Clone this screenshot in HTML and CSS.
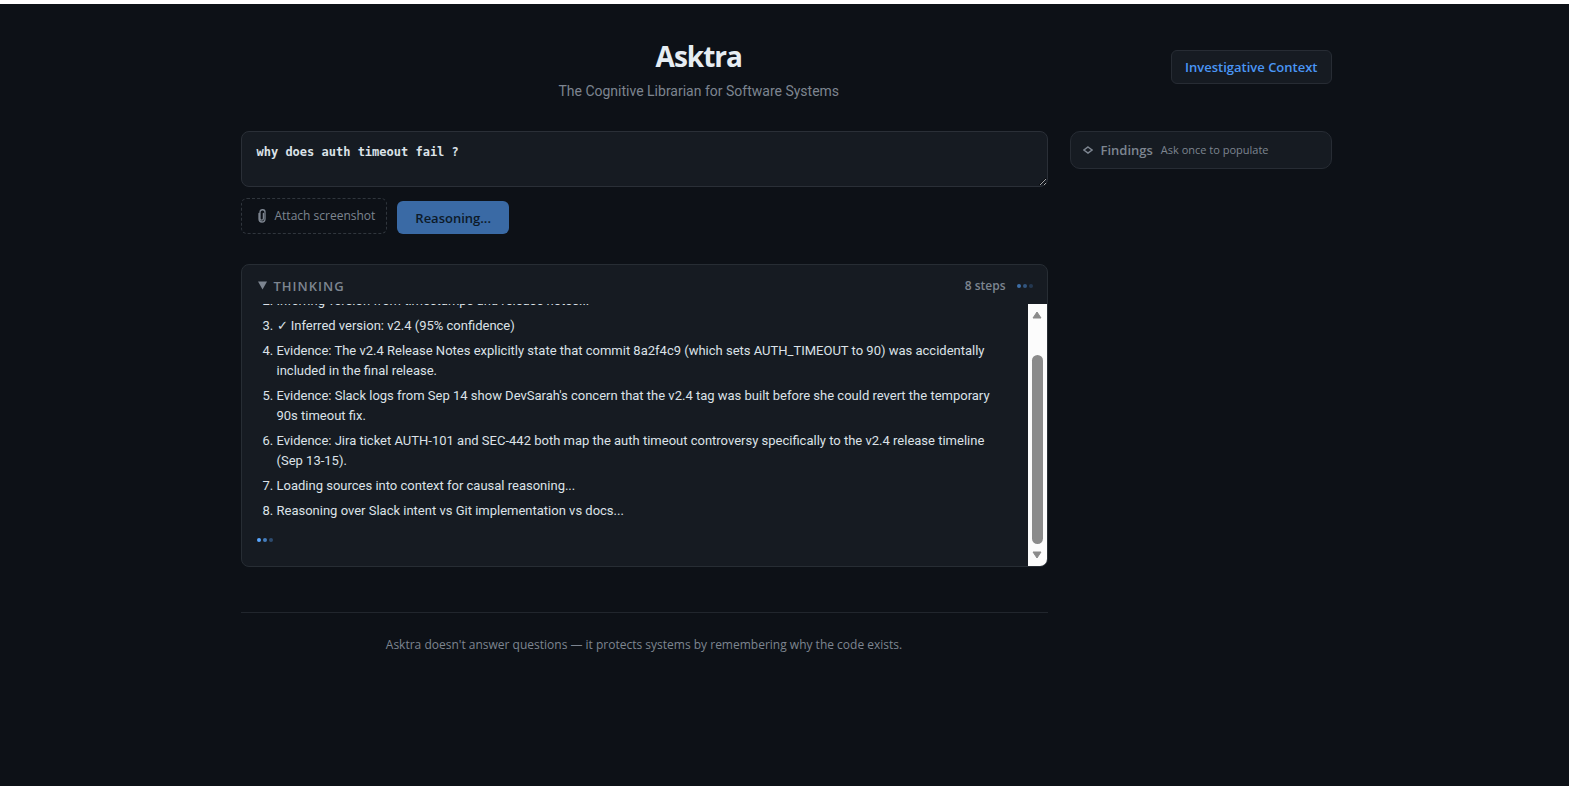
FILE: index.html
```
<!DOCTYPE html>
<html lang="en">
<head>
    <meta charset="UTF-8">
    <meta name="viewport" content="width=device-width, initial-scale=1.0">
    <title>Asktra</title>
    <link rel="stylesheet" href="styles.css">
</head>
<body>
    <div class="app">
        <header class="header">
            <div class="brand">
                <h1>Asktra</h1>
                <p class="tagline">The Cognitive Librarian for Software Systems</p>
            </div>
            <button type="button" class="context-btn">Investigative Context</button>
        </header>

        <div class="layout">
            <main class="main">
                <form class="ask">
                    <textarea class="query" aria-label="Question">why does auth timeout fail ?</textarea>
                    <div class="actions">
                        <button type="button" class="attach">
                            <svg class="clip" viewBox="0 0 10 14" fill="none" stroke="currentColor" stroke-linecap="round">
                                <path d="M2 4.5v5.5a3 3 0 0 0 6 0V3.500a2.500 2.500 0 0 0-5-.5v6.500a1.700 1.700 0 0 0 3.400 0V4.500" stroke-width="1.300"/>
                            </svg>
                            Attach screenshot
                        </button>
                        <button type="submit" class="submit" disabled>Reasoning...</button>
                    </div>
                </form>

                <section class="thinking">
                    <button type="button" class="thinking-head" aria-expanded="true">
                        <svg class="caret" viewBox="0 0 9 9"><path d="M0 0.500h9L4.500 8.500z" fill="currentColor"/></svg>
                        <span class="thinking-title">Thinking</span>
                        <span class="steps-count">8 steps</span>
                        <span class="dots head-dots"><i></i><i></i><i></i></span>
                    </button>
                    <div class="thinking-body">
                        <div class="thinking-scroll">
                            <ol class="steps" start="2">
                                <li>Inferring version from timestamps and release notes...</li>
                                <li>✓ Inferred version: v2.4 (95% confidence)</li>
                                <li>Evidence: The v2.4 Release Notes explicitly state that commit 8a2f4c9 (which sets AUTH_TIMEOUT to 90) was accidentally included in the final release.</li>
                                <li>Evidence: Slack logs from Sep 14 show DevSarah's concern that the v2.4 tag was built before she could revert the temporary 90s timeout fix.</li>
                                <li>Evidence: Jira ticket AUTH-101 and SEC-442 both map the auth timeout controversy specifically to the v2.4 release timeline (Sep 13-15).</li>
                                <li>Loading sources into context for causal reasoning...</li>
                                <li>Reasoning over Slack intent vs Git implementation vs docs...</li>
                            </ol>
                            <div class="dots"><i></i><i></i><i></i></div>
                        </div>
                        <div class="scrollbar" aria-hidden="true">
                            <svg class="arrow" viewBox="0 0 10 8"><path d="M5 1L9 7H1z"/></svg>
                            <div class="track"><div class="thumb"></div></div>
                            <svg class="arrow" viewBox="0 0 10 8"><path d="M5 7L9 1H1z"/></svg>
                        </div>
                    </div>
                </section>

                <footer class="footer">Asktra doesn't answer questions — it protects systems by remembering why the code exists.</footer>
            </main>

            <aside class="findings">
                <svg class="diamond" viewBox="0 0 10 8" fill="none" stroke="currentColor"><path d="M5 1L9 4L5 7L1 4z" stroke-width="1.500"/></svg>
                <span class="findings-title">Findings</span>
                <span class="findings-hint">Ask once to populate</span>
            </aside>
        </div>
    </div>
</body>
</html>
```
FILE: styles.css
```
* {
    box-sizing: border-box;
}
body {
    margin: 0;
    min-height: 100vh;
    background-color: #0d1117;
    border-top: 4px solid #fff;
    color: #e6edf3;
    font-family: "Open Sans", "Noto Sans", sans-serif;
    font-size: 13px;
    line-height: 20px;
}
button, textarea {
    font-family: inherit;
    font-size: inherit;
    line-height: inherit;
}
.app {
    max-width: 1142px;
    margin: 0 auto;
    padding: 32px 24px 32px 27px;
}
.header {
    display: flex;
    align-items: flex-start;
    gap: 14px;
    margin-bottom: 29px;
}
.brand {
    flex: 1;
    text-align: center;
}
h1 {
    margin: 0 0 4px;
    font-size: 28px;
    line-height: 40px;
    font-weight: 700;
    letter-spacing: -1px;
}
.tagline {
    margin: 0;
    line-height: 22px;
    font-family: Roboto, sans-serif;
    font-size: 14px;
    color: #7d8590;
}
.context-btn {
    margin-top: 14px;
    padding: 6px 13px;
    background-color: #161b22;
    border: 1px solid #272c34;
    border-radius: 6px;
    color: #4a96f5;
    font-weight: 600;
}
.layout {
    display: grid;
    grid-template-columns: minmax(0, 1fr) 262px;
    gap: 22px;
    align-items: start;
}
.ask {
    margin-bottom: 30px;
}
.query {
    display: block;
    width: 100%;
    height: 56px;
    padding: 10px 15px;
    background-color: #161b22;
    border: 1px solid #2a2f37;
    border-radius: 8px;
    color: #dce2e8;
    font-family: "DejaVu Sans Mono", monospace;
    font-size: 12px;
    font-weight: 700;
    resize: vertical;
    outline: none;
}
.actions {
    display: flex;
    align-items: flex-end;
    gap: 10px;
    margin-top: 11px;
}
.attach {
    display: flex;
    align-items: center;
    gap: 8px;
    height: 36px;
    padding: 0 11px 0 15px;
    background: none;
    border: 1px dashed #30363d;
    border-radius: 6px;
    color: #7d8590;
    font-size: 12px;
}
.clip {
    width: 10px;
    height: 14px;
}
.submit {
    height: 33px;
    padding: 0 18px;
    background-color: #3a6aa5;
    border: 0;
    border-radius: 6px;
    color: #0d1a29;
    font-weight: 600;
}
.thinking {
    background-color: #161b22;
    border: 1px solid #272d34;
    border-radius: 8px;
    overflow: hidden;
}
.thinking-head {
    display: flex;
    align-items: center;
    width: 100%;
    height: 39px;
    padding: 2px 14px 0 16px;
    background: none;
    border: 0;
    color: #7d8590;
    font-weight: 600;
}
.caret {
    width: 9px;
    height: 9px;
    margin-right: 7px;
}
.thinking-title {
    text-transform: uppercase;
    letter-spacing: 1px;
}
.steps-count {
    margin-left: auto;
    font-size: 12px;
}
.dots {
    display: flex;
    gap: 2px;
}
.dots i {
    width: 4px;
    height: 4px;
    border-radius: 50%;
    background-color: #58a6ff;
}
.dots i:nth-child(2) {
    opacity: 0.7;
}
.dots i:nth-child(3) {
    opacity: 0.35;
}
.head-dots {
    margin-left: 11px;
    opacity: 0.6;
}
.thinking-body {
    display: flex;
    height: 262px;
}
/* newest step stays in view, older ones run off the top */
.thinking-scroll {
    flex: 1;
    display: flex;
    flex-direction: column;
    justify-content: flex-end;
    overflow: hidden;
    padding: 0 24px 24px 15px;
}
.steps {
    margin: 0 0 12px;
    padding-left: 20px;
    font-family: Roboto, sans-serif;
    color: #dce2e8;
}
.steps li {
    margin-bottom: 5px;
}
.scrollbar {
    display: flex;
    flex-direction: column;
    align-items: center;
    width: 19px;
    padding: 7px 0;
    background-color: #fcfcfc;
}
.arrow {
    width: 10px;
    height: 8px;
    fill: #8b8b8b;
    stroke: #8b8b8b;
    stroke-linejoin: round;
}
.track {
    flex: 1;
    display: flex;
    align-items: flex-end;
    padding-bottom: 7px;
}
.thumb {
    width: 11px;
    height: 84%;
    border-radius: 6px;
    background-color: #8b8b8b;
}
.footer {
    margin-top: 45px;
    padding-top: 22px;
    border-top: 1px solid #21262d;
    color: #7d8590;
    font-size: 12px;
    text-align: center;
}
.findings {
    display: flex;
    align-items: center;
    height: 38px;
    padding: 0 12px;
    background-color: #161b22;
    border: 1px solid #272c34;
    border-radius: 10px;
    color: #7d8590;
}
.diamond {
    width: 10px;
    height: 8px;
    margin-right: 8px;
}
.findings-title {
    margin-right: 8px;
    font-weight: 600;
}
.findings-hint {
    font-size: 11px;
}
```
